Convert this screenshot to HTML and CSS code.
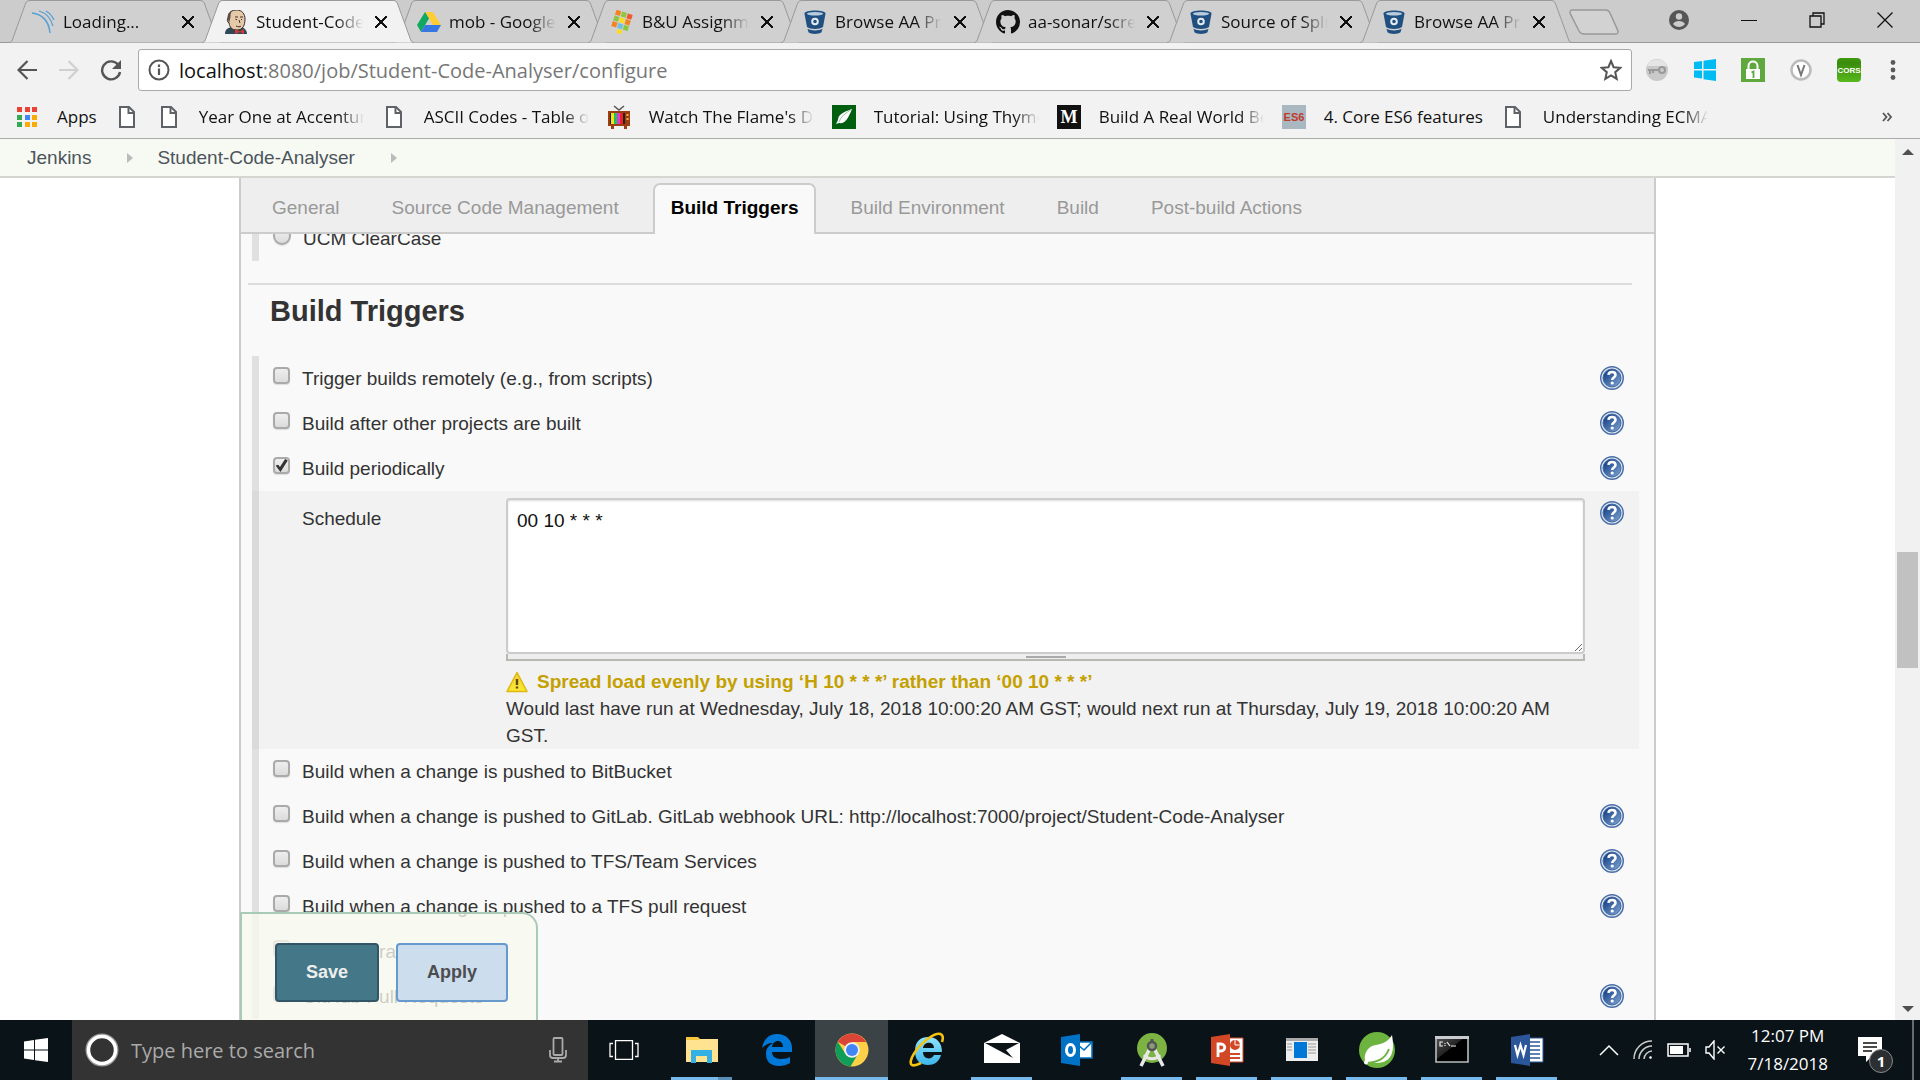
FILE: index.html
```html
<!DOCTYPE html>
<html lang="en">
<head>
<meta charset="utf-8">
<title>Student-Code-Analyser Config [Jenkins]</title>
<link rel="stylesheet" href="styles.css">
</head>
<body>
<svg class="defs" aria-hidden="true">
  <defs>
    <linearGradient id="g-help" x1="0" y1="0" x2="1" y2="1"><stop offset="0.2" stop-color="#1f4a8c"/><stop offset="1" stop-color="#83a9d8"/></linearGradient>
    <linearGradient id="g-warn" x1="0" y1="0" x2="0" y2="1"><stop offset="0" stop-color="#f3cf3c"/><stop offset="1" stop-color="#fbe832"/></linearGradient>
    <linearGradient id="g-cors" x1="0" y1="0" x2="0" y2="1"><stop offset="0" stop-color="#3f9a10"/><stop offset="0.2" stop-color="#3a8c0c"/><stop offset="1" stop-color="#58b81c"/></linearGradient>
    <linearGradient id="g-ie" x1="0" y1="0" x2="0" y2="1"><stop offset="0" stop-color="#8fe4fc"/><stop offset="1" stop-color="#3db5ea"/></linearGradient>
    <linearGradient id="g-cmd" x1="0" y1="0" x2="1" y2="1"><stop offset="0" stop-color="#555"/><stop offset="0.45" stop-color="#222"/><stop offset="0.46" stop-color="#000"/></linearGradient>
  </defs>
  <symbol id="tab-shape" viewBox="0 0 212 43" preserveAspectRatio="none">
    <path d="M0 42.500C3 42 3 41 4 38L16 5C17 2 18 .5 21 .5H191C194 .5 195 2 196 5L208 38C209 41 209 42 212 42.500"/>
  </symbol>
  <symbol id="i-page" viewBox="0 0 16 22"><path d="M1 1h9l5 5v15H1z" fill="#fff" stroke="#5f6368" stroke-width="2"/><path d="M9.500 1v6H15" fill="none" stroke="#5f6368" stroke-width="2"/></symbol>
  <symbol id="i-bucket" viewBox="0 0 22 24">
    <path d="M.5 3.500C.5-.5 21.500-.5 21.500 3.500L19 17c-3 2.500-13 2.500-16 0z" fill="#205081"/><ellipse cx="11" cy="3.700" rx="8" ry="1.800" fill="#b9cbdc"/>
    <circle cx="11" cy="11.500" r="2.800" fill="#205081" stroke="#e4ebf2" stroke-width="2"/><path d="M3.500 18.700c4 2.300 11 2.300 15 0l-1 3.600c-2.500 2.200-10.500 2.200-13 0z" fill="#205081"/>
  </symbol>
  <symbol id="i-help" viewBox="0 0 24 24">
    <circle cx="12" cy="12" r="11.300" fill="#dfe8f4" stroke="#4a6fa8" stroke-width="1.400"/><circle cx="12" cy="12" r="9" fill="url(#g-help)" stroke="#44689f" stroke-width="1"/>
    <path d="M8.500 8.800C8.800 5 15.500 5 15.500 9c0 2.500-3.300 2.500-3.300 5" fill="none" stroke="#fff" stroke-width="2.600"/><circle cx="12.200" cy="17" r="1.600" fill="#fff"/>
  </symbol>
</svg>

<header class="browser">
  <div class="titlebar">
    <ul class="tabs">
      <li class="tab"><svg class="tab-bg"><use href="#tab-shape"/></svg><div class="tab-body">
        <svg class="fav" viewBox="0 0 24 24" fill="none" stroke="#5a9fd4" stroke-width="1.500"><path d="M1 3c10 1 17 8 18 20"/><path d="M8 1c7 2 12 8 14 15" stroke-width="1.300"/><path d="M15 1c4 2 6 5 8 9" stroke-width="1.200"/></svg>
        <span class="tab-title">Loading...</span><button class="close" aria-label="Close tab"></button></div></li>
      <li class="tab active"><svg class="tab-bg"><use href="#tab-shape"/></svg><div class="tab-body">
        <svg class="fav" viewBox="0 0 24 24"><path d="M1 24c0-5 3-6 7-7l9 0c4 1 6 4 6 7z" fill="#2f4858"/><path d="M4 8C4 2 8 0 13 0s8 4 8 9c0 6-2 11-8 11S6 17 5 13C3 12 3 9 4 8z" fill="#e6c9a8" stroke="#32302c"/><path d="M4 9c0-5 1-7 4-8-2 3-1 5-2 8l-1 5z" fill="#5a4d40"/><path d="M11 7h3M16 7h3M11.500 9.500h1.500M17 9.500h1M15 10l1 3M12 16c2 1 4 1 5 0" stroke="#3c332b" fill="none"/><path d="m11 19 5 2.500 4-2.500v5l-4-2-5 2z" fill="#d33833"/></svg>
        <span class="tab-title">Student-Code-Analyser</span><button class="close" aria-label="Close tab"></button></div></li>
      <li class="tab"><svg class="tab-bg"><use href="#tab-shape"/></svg><div class="tab-body">
        <svg class="fav" viewBox="0 0 24 24"><path d="M8 2h8l8 13h-8z" fill="#fc3"/><path d="M8 2 0 15l4 7L12 8.500z" fill="#11a861"/><path d="m8 15-4 7h16l4-7z" fill="#3777e3"/></svg>
        <span class="tab-title">mob - Google Drive</span><button class="close" aria-label="Close tab"></button></div></li>
      <li class="tab"><svg class="tab-bg"><use href="#tab-shape"/></svg><div class="tab-body">
        <svg class="fav" viewBox="0 0 24 24"><g transform="rotate(18 12 12)"><path fill="#f58220" d="M3 2h5v5H3zM15 8h5v5h-5zM3 14h5v5H3z"/><path fill="#8dc63f" d="M9 2h5v5H9zM3 8h5v5H3zM15 14h5v5h-5z"/><path fill="#f0592b" d="M15 2h5v5h-5z"/><path fill="#fddb20" d="M9 8h5v5H9zM10 20h5v4h-5z"/><path fill="#6ec1e4" d="M9 14h5v5H9z"/></g></svg>
        <span class="tab-title">B&amp;U Assignment</span><button class="close" aria-label="Close tab"></button></div></li>
      <li class="tab"><svg class="tab-bg"><use href="#tab-shape"/></svg><div class="tab-body">
        <svg class="fav"><use href="#i-bucket"/></svg>
        <span class="tab-title">Browse AA Projects</span><button class="close" aria-label="Close tab"></button></div></li>
      <li class="tab"><svg class="tab-bg"><use href="#tab-shape"/></svg><div class="tab-body">
        <svg class="fav" viewBox="0 0 16 16"><path fill="#111" d="M8 0C3.580 0 0 3.580 0 8c0 3.540 2.290 6.530 5.470 7.590.4.070.55-.17.55-.38 0-.19-.01-.82-.01-1.490-2.010.37-2.530-.49-2.690-.94-.09-.23-.48-.94-.82-1.130-.28-.15-.68-.52-.01-.53.63-.01 1.080.58 1.230.82.72 1.210 1.870.87 2.330.66.070-.52.28-.87.51-1.070-1.780-.2-3.640-.89-3.640-3.950 0-.87.31-1.590.82-2.150-.08-.2-.36-1.020.08-2.120 0 0 .67-.21 2.200.82.64-.18 1.320-.27 2-.27s1.360.09 2 .27c1.530-1.040 2.200-.82 2.200-.82.44 1.100.16 1.920.08 2.120.51.56.82 1.270.82 2.150 0 3.070-1.870 3.750-3.650 3.950.29.25.54.73.54 1.480 0 1.070-.01 1.930-.01 2.200 0 .21.15.46.55.38A8.010 8.010 0 0 0 16 8c0-4.420-3.580-8-8-8z"/></svg>
        <span class="tab-title">aa-sonar/screenshots</span><button class="close" aria-label="Close tab"></button></div></li>
      <li class="tab"><svg class="tab-bg"><use href="#tab-shape"/></svg><div class="tab-body">
        <svg class="fav"><use href="#i-bucket"/></svg>
        <span class="tab-title">Source of Splunk</span><button class="close" aria-label="Close tab"></button></div></li>
      <li class="tab"><svg class="tab-bg"><use href="#tab-shape"/></svg><div class="tab-body">
        <svg class="fav"><use href="#i-bucket"/></svg>
        <span class="tab-title">Browse AA Projects</span><button class="close" aria-label="Close tab"></button></div></li>
    </ul>
    <button class="new-tab" aria-label="New tab"><svg viewBox="0 0 52 26" width="52" height="26"><path d="M4 1h34c2 0 3 1 4 3l8 18c0 2 0 3-2 3H16c-3 0-4-1-5-3L2 4c0-2 0-3 2-3z" fill="#d2d2d2" stroke="#999" stroke-width="1.500"/></svg></button>
    <div class="window-controls">
      <button aria-label="Profile"><svg width="20" height="20" viewBox="0 0 20 20"><circle cx="10" cy="10" r="10" fill="#555"/><circle cx="10" cy="6.500" r="3.200" fill="#ccc"/><path d="M4 14c2-4 10-4 12 0-3 4-9 4-12 0z" fill="#ccc"/></svg></button>
      <button aria-label="Minimize"><svg width="16" height="16" viewBox="0 0 16 16"><path d="M0 8.500h16" stroke="#111"/></svg></button>
      <button aria-label="Restore"><svg width="16" height="16" viewBox="0 0 16 16" fill="none" stroke="#111" stroke-width="1.300"><path d="M1 4h11v11H1zM4 4V1h11v11h-3"/></svg></button>
      <button aria-label="Close"><svg width="16" height="16" viewBox="0 0 16 16"><path d="m.5.5 15 15m0-15-15 15" stroke="#111" stroke-width="1.300"/></svg></button>
    </div>
  </div>

  <div class="toolbar">
    <button class="tool" aria-label="Back"><svg width="20" height="20" viewBox="0 0 20 20" fill="none" stroke="#555" stroke-width="2.200"><path d="M20 10H2M10.500 1 1.500 10l9 9"/></svg></button>
    <button class="tool" aria-label="Forward"><svg width="20" height="20" viewBox="0 0 20 20" fill="none" stroke="#d0d0d0" stroke-width="2.200"><path d="M0 10h18M9.500 1l9 9-9 9"/></svg></button>
    <button class="tool" aria-label="Reload"><svg width="22" height="22" viewBox="0 0 22 22"><path d="M18 5.500A9 9 0 1 0 20 13" fill="none" stroke="#555" stroke-width="2.400"/><path d="M21 1v9h-9z" fill="#555"/></svg></button>
    <div class="omnibox">
      <svg width="22" height="22" viewBox="0 0 22 22"><circle cx="11" cy="11" r="9.500" fill="none" stroke="#555" stroke-width="2"/><path d="M11 9.500V16M11 5.500V8" stroke="#555" stroke-width="2.200"/></svg>
      <div class="url" role="textbox" aria-label="Address"><b>localhost</b>:8080/job/Student-Code-Analyser/configure</div>
      <svg width="22" height="22" viewBox="0 0 22 22"><path d="m11 2 2.600 6.200 6.700.6-5.100 4.400 1.500 6.600L11 16.300l-5.700 3.500 1.500-6.600L1.700 8.800l6.700-.6z" fill="none" stroke="#555" stroke-width="2"/></svg>
    </div>
    <div class="extensions">
      <svg width="24" height="24" viewBox="0 0 24 24"><circle cx="12" cy="12" r="11" fill="#c9c9c9"/><path d="M2 8a11 11 0 0 1 20 0z" fill="#e5e5e5"/><circle cx="17" cy="12" r="3" fill="none" stroke="#999" stroke-width="2"/><path d="M14 12H3m2 0v4m3-4v3" stroke="#999" stroke-width="2"/></svg>
      <svg width="24" height="24" viewBox="0 0 24 24" fill="#00bcf2"><path d="M1 4l8-1v8H1zM10.500 2.800 23 1v10H10.500zM1 12.500h8v8l-8-1zM10.500 12.500H23V23l-12.500-1.800z"/></svg>
      <svg width="24" height="24" viewBox="0 0 24 24"><path fill="#5fa83d" d="M0 0h24v24H0z"/><path d="M7.500 12V8c0-6 9-6 9 0v3" fill="none" stroke="#fff" stroke-width="2"/><path d="M5 11h14v10H5z" fill="#fff"/><path d="m10.500 14.500 2-1V20" fill="none" stroke="#5fa83d" stroke-width="1.800"/></svg>
      <svg width="24" height="24" viewBox="0 0 24 24"><circle cx="12" cy="12" r="9.500" fill="#fff" stroke="#bbb" stroke-width="2.500"/><path d="m8.500 7 3.500 10L15.500 7" fill="none" stroke="#777" stroke-width="2"/></svg>
      <svg width="24" height="24" viewBox="0 0 24 24"><rect width="24" height="24" rx="4" fill="url(#g-cors)"/><text x="12" y="15" text-anchor="middle" class="cors">CORS</text></svg>
      <button class="menu" aria-label="Menu"><svg width="6" height="20" viewBox="0 0 6 20" fill="#5a5a5a"><circle cx="3" cy="2.500" r="2.400"/><circle cx="3" cy="10" r="2.400"/><circle cx="3" cy="17.500" r="2.400"/></svg></button>
    </div>
  </div>

  <nav class="bookmarks" aria-label="Bookmarks">
    <a href="#"><svg viewBox="0 0 24 24"><path fill="#ea4335" d="M2 2h5v5H2zM10 2h5v5h-5zM17 2h5v5h-5z"/><path fill="#34a853" d="M2 10h5v5H2zM2 17h5v5H2z"/><path fill="#4285f4" d="M10 10h5v5h-5z"/><path fill="#fbab05" d="M17 10h5v5h-5zM10 17h5v5h-5zM17 17h5v5h-5z"/></svg><span>Apps</span></a>
    <a href="#" aria-label="Untitled"><svg class="page-icon"><use href="#i-page"/></svg></a>
    <a href="#"><svg class="page-icon"><use href="#i-page"/></svg><span>Year One at Accenture</span></a>
    <a href="#"><svg class="page-icon"><use href="#i-page"/></svg><span>ASCII Codes - Table of ascii</span></a>
    <a href="#"><svg viewBox="0 0 24 24"><path d="m7 1 5 4 5-4" stroke="#555" stroke-width="1.500" fill="none"/><path d="M1 6h22v15H1zM4 21h3v3H4zM17 21h3v3h-3z" fill="#9c3d13"/><path d="M3 8h15v11H3z" fill="#222"/><path fill="#f4e31b" d="M4 8h3v11H4z"/><path fill="#21c05a" d="M7 8h3v11H7z"/><path fill="#e03bd0" d="M10 8h3v11h-3z"/><path fill="#e22" d="M13 8h3v11h-3z"/><path fill="#f2b13c" d="M19.500 9h2v2h-2zM19.500 13h2v2h-2z"/></svg><span>Watch The Flame's Daughter</span></a>
    <a href="#"><svg viewBox="0 0 24 24"><path fill="#005f0f" d="M0 0h24v24H0z"/><path d="M20 4C11 7 6 10 6 15l-2 4 3-1c6 1 9-4 13-14z" fill="#fff"/><path d="M20 4C12 9 9 12 7 17" stroke="#9ac29f" fill="none"/></svg><span>Tutorial: Using Thymeleaf</span></a>
    <a href="#"><svg viewBox="0 0 24 24"><path fill="#111" d="M0 0h24v24H0z"/><text x="12" y="18" text-anchor="middle" class="medium">M</text></svg><span>Build A Real World Beautiful</span></a>
    <a href="#"><svg viewBox="0 0 24 24"><path fill="#a9b7c0" d="M0 0h24v24H0z"/><text x="12" y="16" text-anchor="middle" class="es6">ES6</text></svg><span>4. Core ES6 features</span></a>
    <a href="#"><svg class="page-icon"><use href="#i-page"/></svg><span>Understanding ECMAScript</span></a>
    <button class="more" aria-label="More bookmarks"><svg width="10" height="10" viewBox="0 0 10 10" fill="none" stroke="#555" stroke-width="1.800"><path d="m1 1 3.500 4L1 9M5.500 1 9 5 5.500 9"/></svg></button>
  </nav>
</header>

<div class="viewport">
  <div class="document">
    <nav class="breadcrumb" aria-label="Breadcrumb"><a href="#">Jenkins</a><i></i><a href="#">Student-Code-Analyser</a><i></i></nav>
    <main class="config">
      <nav class="config-tabs" aria-label="Sections">
        <a href="#">General</a><a href="#">Source Code Management</a><a href="#" class="current">Build Triggers</a><a href="#">Build Environment</a><a href="#">Build</a><a href="#">Post-build Actions</a>
      </nav>
      <form class="config-form">
        <div class="row first"><input type="radio" id="ucm"><label for="ucm">UCM ClearCase</label></div>
        <section>
          <h1>Build Triggers</h1>
          <div class="row"><input type="checkbox" id="t1"><label for="t1">Trigger builds remotely (e.g., from scripts)</label><a class="help" href="#" aria-label="Help"><svg><use href="#i-help"/></svg></a></div>
          <div class="row"><input type="checkbox" id="t2"><label for="t2">Build after other projects are built</label><a class="help" href="#" aria-label="Help"><svg><use href="#i-help"/></svg></a></div>
          <div class="row"><input type="checkbox" id="t3" checked><label for="t3">Build periodically</label><a class="help" href="#" aria-label="Help"><svg><use href="#i-help"/></svg></a></div>
          <div class="nested">
            <label for="schedule">Schedule</label>
            <div class="field">
              <textarea id="schedule">00 10 * * *</textarea>
              <div class="grip"><span></span></div>
              <p class="warning"><svg width="22" height="22" viewBox="0 0 22 22"><path d="M11 1.500 21 20.500H1z" fill="url(#g-warn)" stroke="#dfb911" stroke-width="1.600" stroke-linejoin="round"/><path d="M11 8v6M11 15.500v2" stroke="#5b4a08" stroke-width="2.400"/></svg><strong>Spread load evenly by using ‘H 10 * * *’ rather than ‘00 10 * * *’</strong></p>
              <p>Would last have run at Wednesday, July 18, 2018 10:00:20 AM GST; would next run at Thursday, July 19, 2018 10:00:20 AM GST.</p>
            </div>
            <a class="help" href="#" aria-label="Help"><svg><use href="#i-help"/></svg></a>
          </div>
          <div class="row"><input type="checkbox" id="t4"><label for="t4">Build when a change is pushed to BitBucket</label></div>
          <div class="row"><input type="checkbox" id="t5"><label for="t5">Build when a change is pushed to GitLab. GitLab webhook URL: http://localhost:7000/project/Student-Code-Analyser</label><a class="help" href="#" aria-label="Help"><svg><use href="#i-help"/></svg></a></div>
          <div class="row"><input type="checkbox" id="t6"><label for="t6">Build when a change is pushed to TFS/Team Services</label><a class="help" href="#" aria-label="Help"><svg><use href="#i-help"/></svg></a></div>
          <div class="row"><input type="checkbox" id="t7"><label for="t7">Build when a change is pushed to a TFS pull request</label><a class="help" href="#" aria-label="Help"><svg><use href="#i-help"/></svg></a></div>
          <div class="row"><input type="checkbox" id="t8"><label for="t8">GitHub Branches</label></div>
          <div class="row"><input type="checkbox" id="t9"><label for="t9">GitHub Pull Requests</label><a class="help" href="#" aria-label="Help"><svg><use href="#i-help"/></svg></a></div>
        </section>
        <div class="actions"><button type="button" class="save">Save</button><button type="button" class="apply">Apply</button></div>
      </form>
    </main>
  </div>
  <div class="scrollbar"><i class="up"></i><span class="thumb"></span><i class="down"></i></div>
</div>

<footer class="taskbar">
  <button class="start" aria-label="Start"><svg width="24" height="24" viewBox="0 0 24 24" fill="#fff"><path d="M0 3.500 10 2v9.500H0zM11 1.800 24 0v11.500H11zM0 12.500h10V22L0 20.500zM11 12.500h13V24l-13-1.800z"/></svg></button>
  <div class="search">
    <svg width="34" height="34" viewBox="0 0 34 34"><circle cx="17" cy="17" r="15.500" fill="none" stroke="#999" stroke-width="2"/><circle cx="17" cy="17" r="13.500" fill="none" stroke="#fff" stroke-width="3.500"/></svg>
    <input type="text" placeholder="Type here to search" aria-label="Search">
    <svg width="18" height="26" viewBox="0 0 18 26" fill="none" stroke="#aaa" stroke-width="1.800"><rect x="4.500" y="1" width="9" height="17" rx="1"/><path d="M1 13v5c0 2 1 3 3 3h10c2 0 3-1 3-3v-5M9 21v3M5 24.500h8"/></svg>
  </div>
  <button class="app view" aria-label="Task view"><svg width="30" height="20" viewBox="0 0 30 20" fill="none" stroke="#fff" stroke-width="1.300"><path d="M6.500.6h17v18.800h-17zM4 3.500H1v13h3M26 3.500h3v13h-3"/></svg></button>
  <button class="app open split" aria-label="File Explorer"><svg viewBox="0 0 36 36"><path d="M2 5h12l3 3H2z" fill="#f7c63a"/><path d="M2 8l12 0 2-1h18v23H2z" fill="#ffe391"/><path d="M7 31V18h21v13h-5v-7H12v7z" fill="#33b1e5"/></svg></button>
  <button class="app" aria-label="Edge"><svg viewBox="0 0 36 36"><path d="M3 16C5 6 11 2 18 2c10 0 15 7 15 14v4H13c0 4 3 7 9 7 4 0 7-1 9-2v6c-3 2-7 3-11 3C11 34 7 29 7 22c0-5 2-8 7-11-5 0-8 2-11 5zm10-1h11c0-8-10-8-11 0z" fill="#0078d7"/></svg></button>
  <button class="app open focused" aria-label="Chrome"><svg viewBox="0 0 36 36"><circle cx="18" cy="18" r="16.500" fill="#fdd047"/><path d="M18 18 3.700 9.800A16.500 16.500 0 0 1 32.300 10H18z" fill="#dc4437"/><path d="M3.700 9.800A16.500 16.500 0 0 0 16.500 34.400L24 22l-6 3-7-4z" fill="#109d58"/><circle cx="18" cy="18" r="7.800" fill="#f1f1f1"/><circle cx="18" cy="18" r="6" fill="#4285f4"/></svg></button>
  <button class="app" aria-label="Internet Explorer"><svg viewBox="0 0 36 36"><path d="M6 19C6 9 12 5 19 5c9 0 14 6 14 15H14c0 8 9 8 11 3h7c-2 7-7 10-13 10C11 33 6 28 6 19zm8-3h11c0-7-10-7-11 0z" fill="url(#g-ie)"/><path d="M33 10C36 1 30-1 20 6 8 14-2 30 3 33c2 1 5 0 9-2" fill="none" stroke="#f3c312" stroke-width="2.600"/></svg></button>
  <button class="app open" aria-label="Mail"><svg viewBox="0 0 36 36"><path d="M0 11 18 2l18 9v20H0z" fill="#fff"/><path d="M1 11h34L22 18l7 8z" fill="#0d1418"/></svg></button>
  <button class="app" aria-label="Outlook"><svg viewBox="0 0 36 36"><path d="M19 10h14v16H19z" fill="#fff" stroke="#0072c6" stroke-width="1.600"/><path d="m19 13 6 5 8-8" fill="none" stroke="#0072c6" stroke-width="1.600"/><path d="M2 5l19-3v32L2 31z" fill="#0072c6"/><ellipse cx="11.500" cy="18" rx="4" ry="5.500" fill="none" stroke="#fff" stroke-width="3"/></svg></button>
  <button class="app open" aria-label="Android Studio"><svg viewBox="0 0 36 36"><circle cx="18" cy="16" r="15" fill="#7cb342"/><path d="m16 16-9 18M20 16l9 18" stroke="#e8e8e8" stroke-width="3.500"/><path d="M10 23c4 5 12 5 16 0" fill="none" stroke="#e8e8e8" stroke-width="3"/><circle cx="18" cy="14" r="4" fill="#8a9a7a" stroke="#555" stroke-width="2.500"/><path d="M18 7v4" stroke="#555" stroke-width="3"/></svg></button>
  <button class="app open" aria-label="PowerPoint"><svg viewBox="0 0 36 36"><path d="M18 6h16v24H18z" fill="#fff" stroke="#d24726"/><circle cx="26" cy="13" r="5" fill="#d24726"/><path d="M26 13V7M26 13h6" stroke="#fff"/><path d="M21 22h10M21 26h10" stroke="#d24726" stroke-width="2"/><path d="M2 5l19-3v32L2 31z" fill="#d24726"/><path d="M9 25V12h3c5 0 5 7 0 7H9" fill="none" stroke="#fff" stroke-width="2.800"/></svg></button>
  <button class="app open" aria-label="Application"><svg viewBox="0 0 36 36"><path d="M2 6h32v23H2z" fill="#eee"/><path d="M2 6h32v3H2z" fill="#aaa"/><path d="M10 10h13v16H10z" fill="#0078d7"/><path d="M3 12h5M3 15h5M3 18h5M24 12h8M24 15h8M24 18h8M24 21h8" stroke="#999"/></svg></button>
  <button class="app open" aria-label="Spring Tool Suite"><svg viewBox="0 0 36 36"><circle cx="18" cy="18" r="18" fill="#6db33f"/><path d="M33 3c2 12 3 28-16 28-3 0-6-1-9 1-4-4-3-14 5-18 7-2 15-2 20-11z" fill="#fff"/><path d="M8 31c11-1 18-4 22-14" fill="none" stroke="#6db33f" stroke-width="2"/><circle cx="7" cy="30.500" r="2" fill="#fff"/></svg></button>
  <button class="app open" aria-label="Command Prompt"><svg viewBox="0 0 36 36"><path d="M2 5h32v25H2z" fill="url(#g-cmd)" stroke="#b9bdc0" stroke-width="1.600"/><path d="M1 4h34v3H1z" fill="#c8cccf"/><path d="M9 10H6v4h3M11 11v1M11 13v1M13 10l3 4M17 14h5" fill="none" stroke="#eee" stroke-width="1.200"/></svg></button>
  <button class="app open" aria-label="Word"><svg viewBox="0 0 36 36"><path d="M18 6h16v24H18z" fill="#fff" stroke="#2b579a"/><path d="M21 10h10M21 14h10M21 18h10M21 22h10M21 26h10" stroke="#2b579a" stroke-width="1.500"/><path d="M2 5l19-3v32L2 31z" fill="#2b579a"/><path d="m6 13 2.500 10 3-10 3 10L17 13" fill="none" stroke="#fff" stroke-width="2.200"/></svg></button>
  <div class="tray">
    <svg width="20" height="12" viewBox="0 0 20 12" fill="none" stroke="#fff" stroke-width="1.500"><path d="m1 11 9-9 9 9"/></svg>
    <svg width="20" height="20" viewBox="0 0 20 20" fill="none" stroke="#ccc" stroke-width="1.500"><path d="M1 19C1 9 9 1 19 1M6 19C6 12 12 6 19 6M11 19c0-4 4-8 8-8"/><circle cx="17.500" cy="17.500" r="1.300" fill="#fff" stroke="none"/></svg>
    <svg width="24" height="14" viewBox="0 0 24 14"><path d="M1 1h20v12H1zM23 5v4" fill="none" stroke="#fff" stroke-width="1.500"/><path d="M3 3h13v8H3z" fill="#fff"/></svg>
    <svg width="21" height="20" viewBox="0 0 21 20" fill="none" stroke="#fff" stroke-width="1.400"><path d="M1 7h3l5-6v18l-5-6H1zM12.500 6.500l7 7M19.500 6.500l-7 7"/></svg>
    <time class="clock">12:07 PM<br>7/18/2018</time>
    <div class="notes"><svg width="24" height="26" viewBox="0 0 24 26"><path d="M0 0h24v19H14l-6 6v-6H0z" fill="#fff"/><path d="M5 6h14M5 10h14M5 14h9" stroke="#111" stroke-width="1.400"/></svg><span class="badge">1</span></div>
  </div>
  <span class="peek"></span>
</footer>
</body>
</html>
```
FILE: styles.css
```css
* { box-sizing: border-box; }
body {
  margin: 0;
  height: 100vh;
  display: flex;
  flex-direction: column;
  overflow: hidden;
  font-family: "Liberation Sans", Arial, sans-serif;
  font-size: 19px;
  color: #333;
  background: #fff;
}
button { padding: 0; border: 0; background: none; font: inherit; }
a { color: inherit; text-decoration: none; }
svg { display: block; flex: none; }
.defs { position: absolute; width: 0; height: 0; }

/* Browser frame */
.browser { font-family: "Open Sans", "Noto Sans", sans-serif; font-size: 17px; color: #111; background: #f2f2f2; border-bottom: 1px solid #aaa; }
.titlebar { display: flex; height: 43px; background: linear-gradient(#ccc 42px, #999 42px); }
.tabs { display: flex; min-width: 0; margin: 0; padding: 0 0 0 9px; list-style: none; }
.tab { display: grid; flex: 0 1 212px; min-width: 0; }
.tab + .tab { margin-left: -19px; }
.tab-bg, .tab-body { grid-area: 1 / 1; }
.tab-bg { width: 100%; height: 43px; fill: #d0d0d0; stroke: #999; stroke-width: 1; }
.tab.active { z-index: 1; }
.active .tab-bg { fill: #f2f2f2; }
.tab-body { display: flex; align-items: center; min-width: 0; padding: 0 27px 0 22px; z-index: 1; }
.fav { width: 24px; height: 24px; }
.tab-title {
  flex: 1;
  margin: 0 12px 0 8px;
  overflow: hidden;
  white-space: nowrap;
  -webkit-mask-image: linear-gradient(to right, #000 75%, transparent);
  mask-image: linear-gradient(to right, #000 75%, transparent);
}
.close { width: 12px; height: 12px; background: linear-gradient(45deg, transparent 44%, #111 44% 56%, transparent 56%), linear-gradient(-45deg, transparent 44%, #111 44% 56%, transparent 56%); }
.new-tab { align-self: center; margin-left: -4px; }
.window-controls { display: flex; align-items: center; gap: 52px; margin-left: auto; padding: 0 27px 3px 0; }

.toolbar { display: flex; align-items: center; height: 54px; padding-left: 16px; }
.tool { width: 22px; height: 22px; margin-right: 20px; display: grid; place-items: center; }
.tool + .omnibox { margin-left: -4px; }
.omnibox { display: flex; align-items: center; flex: 1; height: 42px; padding: 0 9px; background: #fff; border: 1px solid #aaa; border-radius: 3px; }
.url { flex: 1; margin-left: 9px; font-size: 20px; color: #777; }
.url b { font-weight: 400; color: #111; }
.extensions { display: flex; align-items: center; gap: 24px; padding: 0 24px 0 13px; }
.menu { margin-left: 5px; }
.cors { font: 700 8px "Liberation Sans", sans-serif; fill: #fff; }
.medium { font: 700 18px "Liberation Serif", serif; fill: #fff; }
.es6 { font: 700 11px "Liberation Sans", sans-serif; fill: #c0392b; }

.bookmarks { display: flex; align-items: center; gap: 18px; height: 41px; padding: 0 28px 2px 15px; }
.bookmarks a { display: flex; align-items: center; gap: 18px; }
.bookmarks a svg { width: 24px; height: 24px; }
.bookmarks a .page-icon { height: 22px; }
.bookmarks span {
  max-width: 165px;
  overflow: hidden;
  white-space: nowrap;
}
.bookmarks a:nth-child(n+3):not(:nth-child(8)) span { -webkit-mask-image: linear-gradient(to right, #000 85%, transparent); mask-image: linear-gradient(to right, #000 85%, transparent); }
.more { margin-left: auto; }

/* Page */
.viewport { display: flex; flex: 1; min-height: 0; }
.document { flex: 1; min-width: 0; display: flex; flex-direction: column; overflow: hidden; }
.breadcrumb { display: flex; align-items: center; flex: none; height: 39px; padding: 1px 0 0 27px; background: #f6faf2; border-bottom: 2px solid #d3d7cf; color: #4d545d; }
.breadcrumb i { margin: 0 24px 0 36px; border: 5px solid transparent; border-left: 6px solid #bbb; border-right: 0; }
.config { position: relative; display: flex; flex-direction: column; flex: 1; min-height: 0; margin: 0 239px; border: solid #ccc; border-width: 0 2px; background: #f9f9f9; }
.config-tabs { position: relative; z-index: 1; flex: none; display: flex; align-items: flex-end; gap: 16px; height: 56px; padding-left: 13px; background: linear-gradient(#eee 54px, #ccc 54px); color: #999; }
.config-tabs a { height: 51px; padding: 0 16px; line-height: 46px; border: 2px solid transparent; border-bottom: 0; border-radius: 7px 7px 0 0; }
.config-tabs .current { color: #000; font-weight: 700; background: #f9f9f9; border-color: #ccc; }
.config-form { flex: 1; min-height: 0; overflow: hidden; padding: 0 15px 0 11px; }

.row { display: flex; align-items: flex-start; height: 45px; padding: 10px 15px 0 14px; border-left: 7px solid #e0e0e0; }
.row label { flex: 1; padding-left: 12px; line-height: 26px; }
.row + .row, .nested + .row { border-image: linear-gradient(#e0e0e0 44px, #f9f9f9 44px) 1; border-width: 0 0 0 7px; }
.row.first { margin-top: -18px; }
section { margin: 22px 7px 0 -4px; border-top: 2px solid #ddd; }
section > * { margin-left: 4px; margin-right: -7px; }
h1 { margin: 0 0 32px 22px; padding-top: 14px; font-size: 29px; line-height: 25px; }

input[type="checkbox"], input[type="radio"] {
  appearance: none;
  flex: none;
  width: 17px;
  height: 17px;
  margin: 1px 0 0;
  border: 2px solid #aaa;
  border-radius: 4px;
  background: linear-gradient(#eee, #dcdcdc);
  box-shadow: 0 1px 1px #ddd;
}
input[type="radio"] { width: 18px; height: 18px; border-radius: 50%; }
input[type="checkbox"]:checked::before { content: ""; display: block; width: 13px; height: 13px; background: #333; clip-path: polygon(5% 50%, 25% 45%, 38% 62%, 78% 0, 98% 12%, 42% 100%); }
.help svg { width: 24px; height: 24px; }

.nested { display: flex; align-items: flex-start; height: 258px; padding: 7px 15px 0 43px; border-left: 7px solid #dadada; background: #f2f2f2; }
.nested > label { width: 204px; padding-top: 7px; line-height: 28px; }
.nested .help { margin: 3px 0 0 15px; }
.field { flex: 1; min-width: 0; line-height: 27px; }
textarea { display: block; width: 100%; height: 156px; padding: 7px 9px; border: 2px solid #ccc; border-radius: 4px; font: 19px/28px "Liberation Sans", Arial, sans-serif; color: #111; resize: vertical; box-shadow: inset 0 1px 2px #ddd; }
.grip { display: flex; justify-content: center; align-items: center; height: 7px; border: solid #b8b8b0; border-width: 0 2px 2px; background: #eee; }
.grip span { width: 40px; height: 2px; background: #aaa; }
.field p { margin: 0; }
.field .warning { display: flex; align-items: center; gap: 9px; margin-top: 7px; color: #c4a000; }

.actions { position: absolute; left: -1px; bottom: 0; display: flex; gap: 17px; padding: 29px 28px 18px 33px; background: rgba(247, 248, 238, .78); border: 2px solid #a8cbb8; border-bottom: 0; border-radius: 0 16px 0 0; }
.actions button { height: 59px; padding: 0 29px; border: 2px solid #356; border-radius: 4px; background: #478; color: #eee; font-size: 18px; font-weight: 700; }
.actions .apply { background: #ccdded; border-color: #69c; color: #4d4d4d; }

.scrollbar { display: flex; flex-direction: column; align-items: center; width: 25px; padding: 10px 2px 8px; background: #f1f1f1; }
.scrollbar i { border: 6px solid transparent; }
.scrollbar .up { border-top: 0; border-bottom-color: #505050; margin-bottom: 397px; }
.scrollbar .down { margin-top: auto; border-bottom: 0; border-top-color: #505050; }
.thumb { width: 21px; height: 116px; background: #c1c1c1; }

/* Taskbar */
.taskbar { display: flex; align-items: stretch; flex: none; height: 60px; background: #0a1317; font-family: "Open Sans", "Noto Sans", sans-serif; color: #fff; }
.start { width: 72px; display: grid; place-items: center; }
.search { display: flex; align-items: center; width: 516px; padding: 0 21px 0 13px; background: #333; }
.search input { flex: 1; min-width: 0; margin-left: 12px; padding: 0; border: 0; background: none; font: 20px "Open Sans", "Noto Sans", sans-serif; color: #aaa; }
.search input::placeholder { color: #aaa; opacity: 1; }
.app { display: flex; align-items: center; justify-content: center; width: 73px; margin-left: 2px; }
.app svg { width: 36px; height: 36px; }
.app.view { margin: 0 3px 0 0; width: 72px; }
.app.view svg { width: 30px; height: 20px; }
.app.open { background: linear-gradient(#76b9ed, #76b9ed) center bottom / 61px 3px no-repeat; }
.app.split { background: linear-gradient(to right, #76b9ed 47px, #5a8fb8 47px) center bottom / 61px 3px no-repeat; }
.app.focused { background: linear-gradient(#3c4346 57px, #76b9ed 57px); }
.tray { display: flex; align-items: center; gap: 14px; margin-left: auto; padding-right: 18px; }
.clock { padding-left: 7px; font-size: 17px; line-height: 28px; text-align: center; }
.notes { position: relative; margin: 0 12px 0 16px; }
.badge { position: absolute; left: 11px; top: 12px; width: 24px; height: 24px; border: 1px solid #888; border-radius: 50%; background: #2b2f32; font-size: 15px; font-weight: 700; line-height: 22px; text-align: center; }
.peek { width: 2px; margin-right: 6px; background: #666b6e; }
```
